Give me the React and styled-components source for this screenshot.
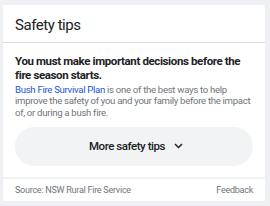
import React from "react";
import styled, { createGlobalStyle } from "styled-components";

const Global = createGlobalStyle`
  body {
    margin: 0;
    background: #eff0f3;
    font-family: Roboto, "Liberation Sans", Arial, sans-serif;
  }
`;

const Page = styled.div`
  width: 270px;
  height: 206px;
  box-sizing: border-box;
  padding: 5px 5px 0 3px;
`;

const Card = styled.div`
  background: #fff;
  display: flex;
  flex-direction: column;
`;

const Header = styled.div`
  height: 38px;
  box-sizing: border-box;
  padding: 2px 12px 0;
  display: flex;
  align-items: center;
  font-size: 15px;
  letter-spacing: -0.45px;
  color: #202124;
  border-bottom: 1px solid #dadce0;
`;

const Body = styled.div`
  padding: 11px 12px 11px 12px;
`;

const Lead = styled.div`
  font-size: 11.5px;
  font-weight: 700;
  letter-spacing: -0.38px;
  line-height: 14px;
  color: #202124;
`;

const Text = styled.div`
  margin-top: 2px;
  font-size: 9.6px;
  letter-spacing: -0.3px;
  line-height: 11.3px;
  color: #70757a;
`;

const Link = styled.span`
  color: #1a55d6;
`;

const MoreButton = styled.div`
  margin-top: 9px;
  height: 39px;
  border-radius: 20px;
  background: #f1f3f4;
  display: flex;
  align-items: center;
  justify-content: center;
  gap: 9px;
  padding-left: 4px;
  font-size: 11.5px;
  font-weight: 500;
  letter-spacing: -0.45px;
  color: #202124;
`;

const Footer = styled.div`
  border-top: 2px solid #f1f2f4;
  height: 22px;
  padding: 0 12px;
  display: flex;
  align-items: center;
  justify-content: space-between;
  font-size: 9px;
  letter-spacing: -0.25px;
  color: #70757a;
`;

const Chevron = () => (
  <svg width="9" height="6" viewBox="0 0 9 6">
    <path d="M1 1l3.5 3.5L8 1" fill="none" stroke="#202124" strokeWidth="1.5" />
  </svg>
);

export default function App() {
  return (
    <>
      <Global />
      <Page>
        <Card>
          <Header>Safety tips</Header>
          <Body>
            <Lead>You must make important decisions before the fire season starts.</Lead>
            <Text>
              <Link>Bush Fire Survival Plan</Link> is one of the best ways to help
              improve the safety of you and your family before the impact of, or
              during a bush fire.
            </Text>
            <MoreButton>
              More safety tips
              <Chevron />
            </MoreButton>
          </Body>
          <Footer>
            <span>Source: NSW Rural Fire Service</span>
            <span>Feedback</span>
          </Footer>
        </Card>
      </Page>
    </>
  );
}
